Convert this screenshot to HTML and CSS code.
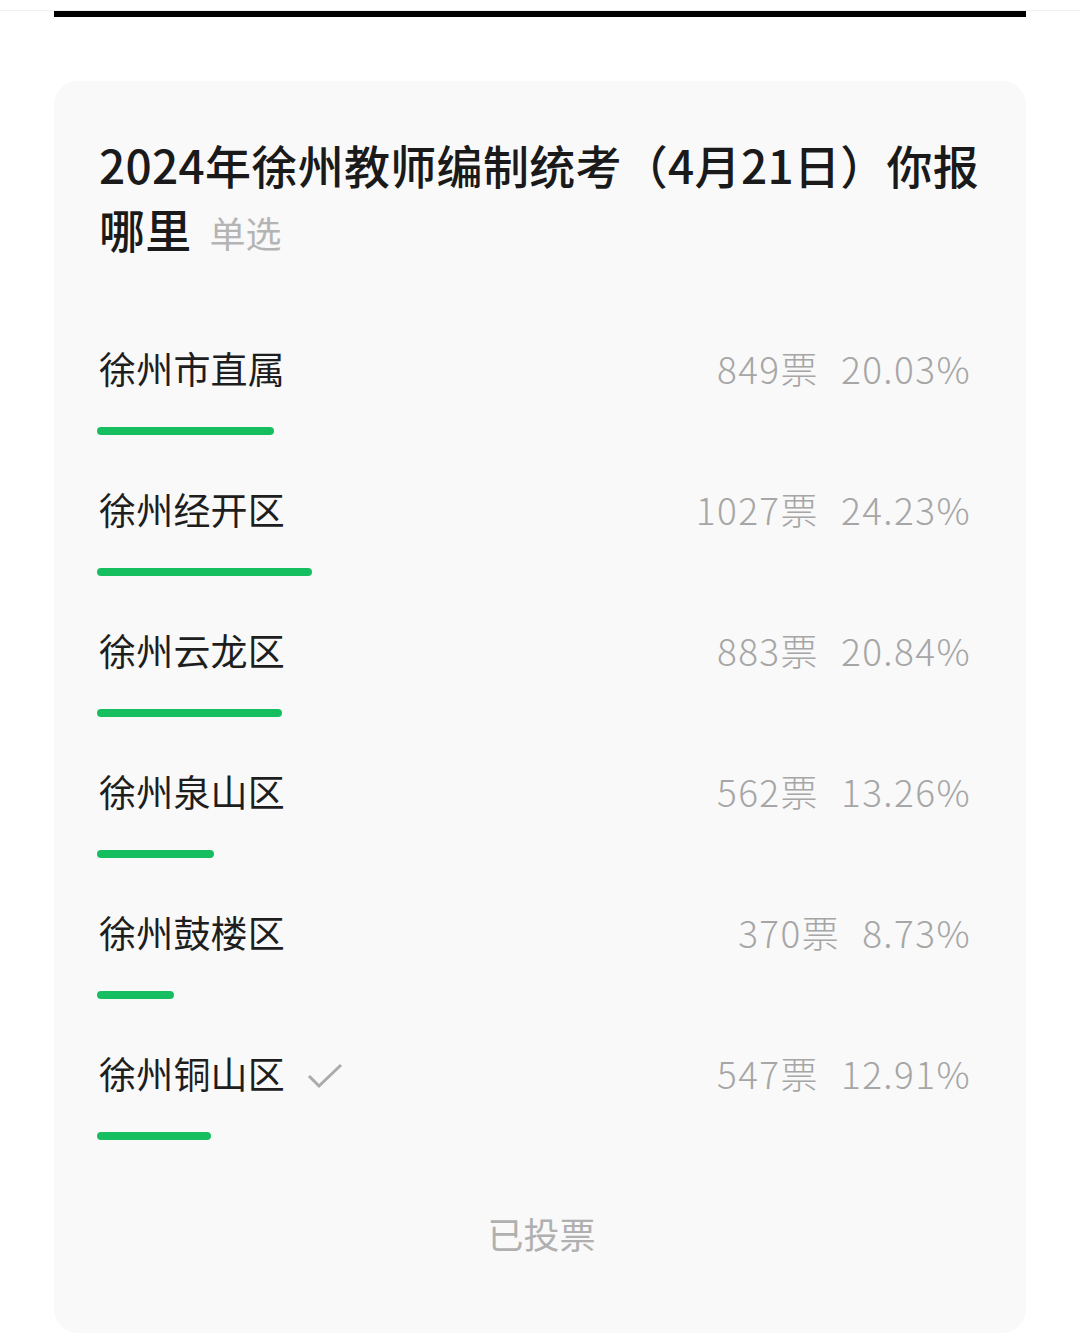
FILE: index.html
```html
<!DOCTYPE html>
<html lang="zh-CN">
<head>
<meta charset="utf-8">
<link rel="stylesheet" href="styles.css">
</head>
<body>
<div class="topline"></div>
<div class="topbar"></div>
<div class="card">
  <h1 class="title">2024年徐州教师编制统考（4月21日）你报哪里<span class="kind">单选</span></h1>
  <div class="options">
    <div class="option">
      <div class="row"><span class="label">徐州市直属</span><span class="stat"><span class="votes">849票</span><span class="pct">20.03%</span></span></div>
      <div class="track"><div class="fill" style="width:20.03%"></div></div>
    </div>
    <div class="option">
      <div class="row"><span class="label">徐州经开区</span><span class="stat"><span class="votes">1027票</span><span class="pct">24.23%</span></span></div>
      <div class="track"><div class="fill" style="width:24.23%"></div></div>
    </div>
    <div class="option">
      <div class="row"><span class="label">徐州云龙区</span><span class="stat"><span class="votes">883票</span><span class="pct">20.84%</span></span></div>
      <div class="track"><div class="fill" style="width:20.84%"></div></div>
    </div>
    <div class="option">
      <div class="row"><span class="label">徐州泉山区</span><span class="stat"><span class="votes">562票</span><span class="pct">13.26%</span></span></div>
      <div class="track"><div class="fill" style="width:13.26%"></div></div>
    </div>
    <div class="option">
      <div class="row"><span class="label">徐州鼓楼区</span><span class="stat"><span class="votes">370票</span><span class="pct">8.73%</span></span></div>
      <div class="track"><div class="fill" style="width:8.73%"></div></div>
    </div>
    <div class="option">
      <div class="row"><span class="label">徐州铜山区<svg class="check" width="36" height="28" viewBox="0 0 36 28"><path d="M2 14 L12 24 L34 3" fill="none" stroke="#ababab" stroke-width="3"/></svg></span><span class="stat"><span class="votes">547票</span><span class="pct">12.91%</span></span></div>
      <div class="track"><div class="fill" style="width:12.91%"></div></div>
    </div>
  </div>
  <div class="voted">已投票</div>
</div>
</body>
</html>
```
FILE: styles.css
```css
html, body {
  margin: 0;
  padding: 0;
  background: #ffffff;
}
body {
  font-family: "Noto Sans CJK SC", "Noto Sans", sans-serif;
  width: 1080px;
  height: 1341px;
  overflow: hidden;
}
.topline {
  margin-top: 10px;
  height: 1px;
  background: #f1f1f1;
}
.topbar {
  margin: 0 54px;
  height: 6px;
  background: #000;
}
.card {
  margin: 64px 54px 0;
  background: #f9f9f9;
  border-radius: 24px;
  padding: 51px 40px 60px 43px;
  height: 1252px;
  box-sizing: border-box;
}
.title {
  margin: 0;
  padding: 0 0 0 2px;
  font-size: 46px;
  line-height: 64px;
  font-weight: 500;
  color: #1a1a1a;
  letter-spacing: 0.3px;
}
.kind {
  display: inline-block;
  font-size: 36px;
  line-height: 40px;
  font-weight: 400;
  color: #b4b4b4;
  margin-left: 18px;
  letter-spacing: 0;
}
.options {
  margin-top: 83px;
  margin-right: 3px;
  display: flex;
  flex-direction: column;
  gap: 49px;
}
.option {
  display: flex;
  flex-direction: column;
  gap: 34px;
}
.row {
  display: flex;
  justify-content: space-between;
  align-items: center;
  height: 50px;
  padding: 0 12px 0 2px;
}
.label {
  font-size: 37px;
  color: #1e1e1e;
  display: flex;
  align-items: center;
  letter-spacing: 0.2px;
}
.check {
  margin-left: 22px;
  margin-top: 6px;
}
.stat {
  display: flex;
  gap: 22px;
  font-size: 37px;
  font-weight: 300;
  color: #a6a6a6;
  letter-spacing: 1.4px;
}
.track {
  height: 8px;
}
.fill {
  height: 8px;
  border-radius: 4px;
  background: #15bf5f;
}
.voted {
  margin-top: 68px;
  text-align: center;
  font-size: 36px;
  line-height: 50px;
  color: #b0b0b0;
}
```
